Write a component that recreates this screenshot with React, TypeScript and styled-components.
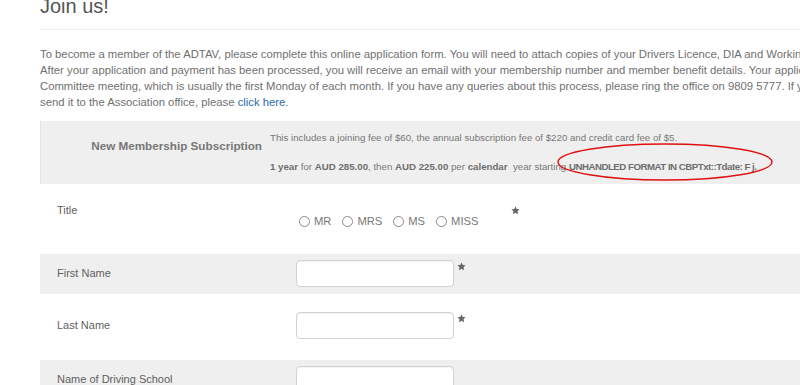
import styled, { createGlobalStyle } from "styled-components"

const GlobalStyle = createGlobalStyle`
  html, body {
    margin: 0;
    padding: 0;
    background: #fff;
    overflow: hidden;
  }
  body {
    font-family: "Liberation Sans", Arial, sans-serif;
    color: #666;
  }
`

const Page = styled.div`
  position: relative;
  width: 940px;
  padding-left: 40px;
`

const Heading = styled.h1`
  margin: -5px 0 0 0;
  font-size: 20px;
  line-height: 22px;
  font-weight: normal;
  color: #555;
`

const Rule = styled.hr`
  margin: 12px 0 0 0;
  border: 0;
  border-top: 1px solid #eee;
`

const Intro = styled.p`
  margin: 16px 0 0 0;
  font-size: 11.3px;
  line-height: 16px;
  white-space: nowrap;
  color: #707070;

  a {
    color: #2a6ab0;
    text-decoration: none;
  }
`

const SubBox = styled.div`
  margin-top: 11px;
  height: 63px;
  background: #efefef;
  border-left: 1px solid #e4e4e4;
  display: flex;
  gap: 8px;
`

const SubLabel = styled.div`
  width: 221px;
  padding-top: 17px;
  text-align: right;
  font-size: 11.7px;
  line-height: 16px;
  font-weight: bold;
  color: #777;
`

const SubText = styled.div`
  padding-top: 10px;
  font-size: 9.7px;
  line-height: 14px;
  color: #777;
  white-space: nowrap;

  p {
    margin: 0;
  }
  p + p {
    margin-top: 15px;
  }
  b {
    color: #6e6e6e;
  }
`

const Unhandled = styled.b`
  letter-spacing: -0.5px;
`

const Row = styled.div<{ $shade?: boolean; $h: number; $top: number }>`
  display: flex;
  box-sizing: border-box;
  height: ${(p) => p.$h}px;
  padding-top: ${(p) => p.$top}px;
  background: ${(p) => (p.$shade ? "#efefef" : "#fff")};
`

const Label = styled.div<{ $lh?: number }>`
  box-sizing: border-box;
  width: 256px;
  padding-left: 17px;
  font-size: 11px;
  line-height: ${(p) => p.$lh ?? 27}px;
  color: #5f5f5f;
`

const Field = styled.div`
  display: flex;
  align-items: flex-start;
`

const TextInput = styled.input`
  box-sizing: border-box;
  width: 158px;
  height: 27px;
  margin: 0;
  border: 1px solid #d2d2d2;
  border-radius: 4px;
  background: #fff;
  box-shadow: inset 0 1px 1px rgba(0, 0, 0, 0.05);
`

const Radios = styled.div`
  display: flex;
  align-items: center;
  margin-top: 11px;
  margin-left: 3px;
  gap: 11px;
`

const RadioItem = styled.label`
  display: flex;
  align-items: center;
  gap: 4px;
  font-size: 11.2px;
  line-height: 16px;
  color: #777;
`

const RadioCircle = styled.span`
  box-sizing: border-box;
  width: 11px;
  height: 11px;
  border: 1px solid #8a8a8a;
  border-radius: 50%;
  background: #fff;
`

const StarWrap = styled.span<{ $left: number; $top: number }>`
  display: inline-flex;
  margin-left: ${(p) => p.$left}px;
  margin-top: ${(p) => p.$top}px;
  color: #666;
`

const Ring = styled.svg`
  position: absolute;
  left: 556px;
  top: 146px;
  pointer-events: none;
`

function Star({ left, top }: { left: number; top: number }) {
  return (
    <StarWrap $left={left} $top={top}>
      <svg width="9" height="9" viewBox="0 0 24 24">
        <path
          fill="currentColor"
          d="M12 1l3.4 7 7.6.9-5.6 5.2 1.5 7.6L12 17.9l-6.9 3.8 1.5-7.6L1 8.9l7.6-.9z"
        />
      </svg>
    </StarWrap>
  )
}

const titles = ["MR", "MRS", "MS", "MISS"]

export default function App() {
  return (
    <>
      <GlobalStyle />
      <Page>
        <Heading>Join us!</Heading>
        <Rule />
        <Intro>
          To become a member of the ADTAV, please complete this online application form. You will need to attach copies of your Drivers Licence, DIA and Working With Children Check.
          <br />
          After your application and payment has been processed, you will receive an email with your membership number and member benefit details. Your application will be considered at the next
          <br />
          Committee meeting, which is usually the first Monday of each month. If you have any queries about this process, please ring the office on 9809 5777. If you would prefer to post your form and
          <br />
          send it to the Association office, please <a href="#">click here</a>.
        </Intro>

        <SubBox>
          <SubLabel>New Membership Subscription</SubLabel>
          <SubText>
            <p>This includes a joining fee of $60, the annual subscription fee of $220 and credit card fee of $5.</p>
            <p>
              <b>1 year</b> for <b>AUD 285.00</b>, then <b>AUD 225.00</b> per <b>calendar</b>&nbsp; year starting{" "}
              <Unhandled>UNHANDLED FORMAT IN CBPTxt::Tdate: F j.</Unhandled>
            </p>
          </SubText>
        </SubBox>

        <Row $h={70} $top={18}>
          <Label $lh={16}>Title</Label>
          <Field>
            <Radios>
              {titles.map((t) => (
                <RadioItem key={t}>
                  <RadioCircle />
                  {t}
                </RadioItem>
              ))}
            </Radios>
            <Star left={33} top={4} />
          </Field>
        </Row>

        <Row $shade $h={40} $top={6}>
          <Label>First Name</Label>
          <Field>
            <TextInput />
            <Star left={3} top={2} />
          </Field>
        </Row>

        <Row $h={66} $top={18}>
          <Label>Last Name</Label>
          <Field>
            <TextInput />
            <Star left={3} top={2} />
          </Field>
        </Row>

        <Row $shade $h={40} $top={6}>
          <Label>Name of Driving School</Label>
          <Field>
            <TextInput />
          </Field>
        </Row>

        <Ring width="220" height="42" viewBox="0 0 220 42">
          <ellipse cx="109" cy="21" rx="107" ry="18" fill="none" stroke="#e01010" strokeWidth="1.4" />
        </Ring>
      </Page>
    </>
  )
}
